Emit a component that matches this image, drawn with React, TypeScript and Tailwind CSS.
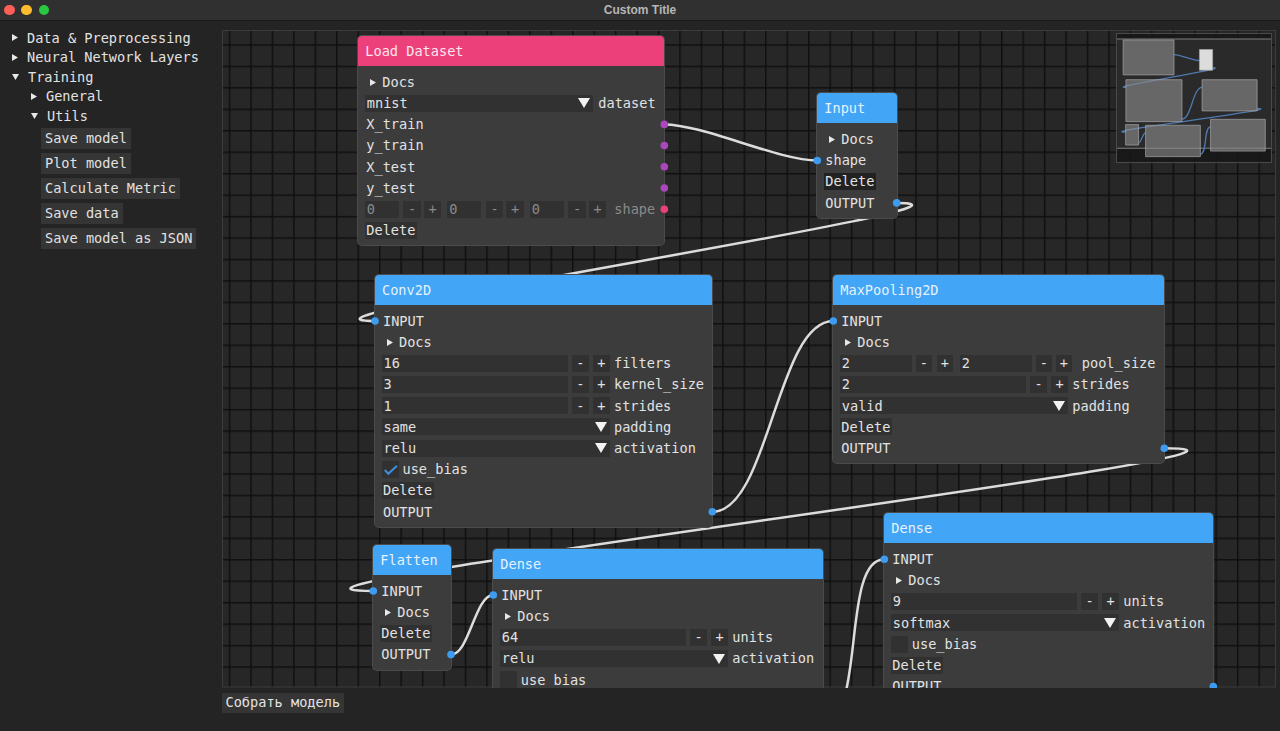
import type { ReactNode } from "react";

const OX = 222;
const OY = 30;
const S = 0.1662;

type Pt = [number, number];

function link(a: Pt, b: Pt) {
  const d = 0.25 * Math.hypot(b[0] - a[0], b[1] - a[1]);
  return `M ${a[0]} ${a[1]} C ${a[0] + d} ${a[1]}, ${b[0] - d} ${b[1]}, ${b[0]} ${b[1]}`;
}

const links: [Pt, Pt][] = [
  [[664.3, 124.4], [817.3, 160.5]],
  [[896.7, 202.9], [375, 321]],
  [[712.3, 511.8], [833.3, 321]],
  [[1164.3, 448.2], [373.3, 591]],
  [[451, 654.6], [493.3, 595]],
  [[822.7, 722.2], [884.3, 559.3]],
];

const pins: { x: number; y: number; c: string }[] = [
  { x: 664.3, y: 124.4, c: "#ab47bc" },
  { x: 664.3, y: 145.6, c: "#ab47bc" },
  { x: 664.3, y: 166.8, c: "#ab47bc" },
  { x: 664.3, y: 188, c: "#ab47bc" },
  { x: 664.3, y: 209.2, c: "#ec407a" },
  { x: 817.3, y: 160.5, c: "#3d9cf0" },
  { x: 896.7, y: 202.9, c: "#3d9cf0" },
  { x: 375, y: 321, c: "#3d9cf0" },
  { x: 712.3, y: 511.8, c: "#3d9cf0" },
  { x: 833.3, y: 321, c: "#3d9cf0" },
  { x: 1164.3, y: 448.2, c: "#3d9cf0" },
  { x: 373.3, y: 591, c: "#3d9cf0" },
  { x: 451, y: 654.6, c: "#3d9cf0" },
  { x: 493.3, y: 595, c: "#3d9cf0" },
  { x: 884.3, y: 559.3, c: "#3d9cf0" },
  { x: 1213.3, y: 686.5, c: "#3d9cf0" },
];

const boxes = [
  { x: 358.3, y: 36, w: 306, h: 210 },
  { x: 817.3, y: 93.3, w: 79.4, h: 124.6, hl: true },
  { x: 375, y: 275, w: 337.3, h: 252.3 },
  { x: 833.3, y: 275, w: 331, h: 187.7 },
  { x: 373.3, y: 545, w: 77.7, h: 123.3 },
  { x: 493.3, y: 549, w: 329.4, h: 189 },
  { x: 884.3, y: 513.3, w: 329, h: 191 },
];

function RightTri() {
  return (
    <svg width="6" height="7" viewBox="0 0 6 7" className="shrink-0">
      <polygon points="0,0 6,3.5 0,7" fill="#e8e8e8" />
    </svg>
  );
}

function DownTri() {
  return (
    <svg width="7" height="6" viewBox="0 0 7 6" className="shrink-0">
      <polygon points="0,0 7,0 3.5,6" fill="#e8e8e8" />
    </svg>
  );
}

function ComboArrow() {
  return (
    <svg width="12" height="10" viewBox="0 0 12 10" className="shrink-0">
      <polygon points="0,0 12,0 6,10" fill="#f2f2f2" />
    </svg>
  );
}

function Row({ children }: { children: ReactNode }) {
  return <div className="h-[17px] flex items-center">{children}</div>;
}

function Text({ children }: { children: ReactNode }) {
  return (
    <Row>
      <span className="pl-[1.5px]">{children}</span>
    </Row>
  );
}

function Docs() {
  return (
    <Row>
      <div className="pl-[5.5px] flex items-center gap-[6px]">
        <RightTri />
        <span>Docs</span>
      </div>
    </Row>
  );
}

function Field({ v, w }: { v: string; w: string }) {
  return <div className={`h-[17px] bg-[#313131] pl-[2px] flex items-center shrink-0 ${w}`}>{v}</div>;
}

function Btn({ v, w = "w-[17.5px]", ml = "ml-[4px]" }: { v: string; w?: string; ml?: string }) {
  return <div className={`h-[17px] bg-[#313131] flex items-center justify-center shrink-0 ${w} ${ml}`}>{v}</div>;
}

function Spin({ v, label }: { v: string; label: string }) {
  return (
    <Row>
      <Field v={v} w="w-[186px]" />
      <Btn v="-" />
      <Btn v="+" ml="ml-[3.5px]" />
      <span className="ml-[4px]">{label}</span>
    </Row>
  );
}

function Combo({ v, label, w = "w-[228.5px]", ml = "ml-[4px]" }: { v: string; label: string; w?: string; ml?: string }) {
  return (
    <Row>
      <div className={`h-[17px] bg-[#313131] pl-[2px] pr-[3px] flex items-center justify-between shrink-0 ${w}`}>
        <span>{v}</span>
        <ComboArrow />
      </div>
      <span className={ml}>{label}</span>
    </Row>
  );
}

function Check({ on }: { on?: boolean }) {
  return (
    <Row>
      <div className="w-[17px] h-[17px] bg-[#313131] shrink-0">
        {on && (
          <svg width="17" height="17" viewBox="0 0 17 17">
            <polyline points="2.8,9 6.3,12.8 15,4.8" fill="none" stroke="#3d8fe0" strokeWidth="2" />
          </svg>
        )}
      </div>
      <span className="ml-[4px]">use_bias</span>
    </Row>
  );
}

function Delete({ dark }: { dark?: boolean }) {
  return (
    <Row>
      <div className={`h-[17px] px-[1.5px] flex items-center ${dark ? "bg-[#222222]" : "bg-[#313131]"}`}>Delete</div>
    </Row>
  );
}

function Node({ x, y, w, title, pink, children }: { x: number; y: number; w: string; title: string; pink?: boolean; children: ReactNode }) {
  return (
    <div
      className={`absolute rounded-[4px] bg-[#3c3c3c] ring-1 ring-[#4b4b4b] ${w}`}
      style={{ left: x - OX, top: y - OY }}
    >
      <div
        className={`h-[30px] rounded-t-[4px] pl-[7px] flex items-center ${
          pink ? "bg-[#ec407a] text-[#fde6ee]" : "bg-[#42a5f5] text-[#e4f2fe]"
        }`}
      >
        {title}
      </div>
      <div className="flex flex-col gap-[4.2px] px-[6.5px] pt-[7.5px] pb-[6.5px]">{children}</div>
    </div>
  );
}

function Tree({ open, label, level }: { open?: boolean; label: string; level: 0 | 1 }) {
  return (
    <div className={`h-[15.5px] flex items-center ${level === 0 ? "pl-[12px] gap-[9px]" : "pl-[31px] gap-[9px]"}`}>
      {open ? <DownTri /> : <RightTri />}
      <span>{label}</span>
    </div>
  );
}

function SideButton({ label }: { label: string }) {
  return <div className="ml-[41px] self-start h-[21px] px-[4px] flex items-center bg-[#353535]">{label}</div>;
}

export default function App() {
  return (
    <div className="w-[1280px] h-[731px] overflow-hidden whitespace-nowrap bg-[#242424] text-[#e2e2e2] text-[13.6px] font-['DejaVu_Sans_Mono',monospace]">
      {/* title bar */}
      <div className="h-[21px] grid grid-cols-[1fr_auto_1fr] items-center bg-[#303030] border-b border-[#1a1a1a]">
        <div className="flex items-center gap-[6.7px] pl-[4px]">
          <span className="w-[10.7px] h-[10.7px] rounded-full bg-[#fe5f57]" />
          <span className="w-[10.7px] h-[10.7px] rounded-full bg-[#febc2e]" />
          <span className="w-[10.7px] h-[10.7px] rounded-full bg-[#28c840]" />
        </div>
        <span className="font-['Liberation_Sans',Arial,sans-serif] font-bold text-[12px] text-[#b6b6b6]">Custom Title</span>
        <div />
      </div>

      <div className="flex pt-[9px]">
        {/* sidebar */}
        <div className="w-[222px] shrink-0 flex flex-col gap-[4px]">
          <Tree label="Data & Preprocessing" level={0} />
          <Tree label="Neural Network Layers" level={0} />
          <Tree label="Training" level={0} open />
          <Tree label="General" level={1} />
          <Tree label="Utils" level={1} open />
          <SideButton label="Save model" />
          <SideButton label="Plot model" />
          <SideButton label="Calculate Metric" />
          <SideButton label="Save data" />
          <SideButton label="Save model as JSON" />
        </div>

        {/* editor */}
        <div className="flex flex-col">
          <div className="relative w-[1054px] h-[657.5px] overflow-hidden bg-[#272727]">
            <svg className="absolute inset-0" width="1054" height="657.5">
              <defs>
                <pattern id="grid" x="6.8" y="14.25" width="21.45" height="21.45" patternUnits="userSpaceOnUse">
                  <rect x="0" y="0" width="1.5" height="21.45" fill="#0f0f0f" />
                  <rect x="0" y="0" width="21.45" height="1.5" fill="#0f0f0f" />
                </pattern>
              </defs>
              <rect x="0" y="0" width="1054" height="657.5" fill="url(#grid)" />
              <rect x="0.5" y="0.5" width="1053" height="656.5" fill="none" stroke="#3c3c3c" />
              <g transform={`translate(${-OX} ${-OY})`}>
                {links.map(([a, b], i) => (
                  <path key={i} d={link(a, b)} fill="none" stroke="#dcdcdc" strokeWidth="2.5" />
                ))}
              </g>
            </svg>

            <Node x={358.3} y={36} w="w-[306px]" title="Load Dataset" pink>
              <Docs />
              <Combo v="mnist" label="dataset" ml="ml-[5px]" />
              <Text>X_train</Text>
              <Text>y_train</Text>
              <Text>X_test</Text>
              <Text>y_test</Text>
              <Row>
                <div className="flex items-center text-[#8a8a8a]">
                  <Field v="0" w="w-[34px]" />
                  <Btn v="-" ml="ml-[4.5px]" />
                  <Btn v="+" ml="ml-[3px]" />
                  <div className="ml-[6px]">
                    <Field v="0" w="w-[34px]" />
                  </div>
                  <Btn v="-" ml="ml-[4.5px]" />
                  <Btn v="+" ml="ml-[3px]" />
                  <div className="ml-[6px]">
                    <Field v="0" w="w-[34px]" />
                  </div>
                  <Btn v="-" ml="ml-[4.5px]" />
                  <Btn v="+" ml="ml-[3px]" />
                  <span className="ml-[8px]">shape</span>
                </div>
              </Row>
              <Delete />
            </Node>

            <Node x={817.3} y={93.3} w="w-[79.4px]" title="Input">
              <Docs />
              <Text>shape</Text>
              <Delete dark />
              <Text>OUTPUT</Text>
            </Node>

            <Node x={375} y={275} w="w-[337.3px]" title="Conv2D">
              <Text>INPUT</Text>
              <Docs />
              <Spin v="16" label="filters" />
              <Spin v="3" label="kernel_size" />
              <Spin v="1" label="strides" />
              <Combo v="same" label="padding" />
              <Combo v="relu" label="activation" />
              <Check on />
              <Delete />
              <Text>OUTPUT</Text>
            </Node>

            <Node x={833.3} y={275} w="w-[331px]" title="MaxPooling2D">
              <Text>INPUT</Text>
              <Docs />
              <Row>
                <Field v="2" w="w-[72px]" />
                <Btn v="-" w="w-[16px]" />
                <Btn v="+" w="w-[16px]" ml="ml-[5px]" />
                <div className="ml-[7px]">
                  <Field v="2" w="w-[72px]" />
                </div>
                <Btn v="-" w="w-[16px]" />
                <Btn v="+" w="w-[16px]" />
                <span className="ml-[10px]">pool_size</span>
              </Row>
              <Spin v="2" label="strides" />
              <Combo v="valid" label="padding" />
              <Delete />
              <Text>OUTPUT</Text>
            </Node>

            <Node x={373.3} y={545} w="w-[77.7px]" title="Flatten">
              <Text>INPUT</Text>
              <Docs />
              <Delete />
              <Text>OUTPUT</Text>
            </Node>

            <Node x={493.3} y={549} w="w-[329.4px]" title="Dense">
              <Text>INPUT</Text>
              <Docs />
              <Spin v="64" label="units" />
              <Combo v="relu" label="activation" />
              <Check />
              <Delete />
              <Text>OUTPUT</Text>
            </Node>

            <Node x={884.3} y={513.3} w="w-[329px]" title="Dense">
              <Text>INPUT</Text>
              <Docs />
              <Spin v="9" label="units" />
              <Combo v="softmax" label="activation" />
              <Check />
              <Delete />
              <Text>OUTPUT</Text>
            </Node>

            {/* pins + minimap */}
            <svg className="absolute inset-0 pointer-events-none" width="1054" height="657.5">
              <g transform={`translate(${-OX} ${-OY})`}>
                {pins.map((p, i) => (
                  <circle key={i} cx={p.x} cy={p.y} r="3.8" fill={p.c} />
                ))}
              </g>
              <defs>
                <clipPath id="mm">
                  <rect x="894" y="3" width="156" height="130" />
                </clipPath>
              </defs>
              <g clipPath="url(#mm)">
                <rect x="894" y="3" width="156" height="130" fill="#181818" fillOpacity="0.85" />
                <rect
                  x={OX * S + 841.6}
                  y={OY * S + 4}
                  width={1054 * S}
                  height={657.5 * S}
                  fill="#303030"
                  fillOpacity="0.75"
                  stroke="#a8a8a8"
                  strokeOpacity="0.7"
                />
                <g transform={`translate(841.6 4) scale(${S})`}>
                  {links.map(([a, b], i) => (
                    <path
                      key={i}
                      d={link(a, b)}
                      fill="none"
                      stroke="#4f7ab0"
                      strokeWidth="1.3"
                      vectorEffect="non-scaling-stroke"
                    />
                  ))}
                  {boxes.map((b, i) => (
                    <rect
                      key={i}
                      x={b.x}
                      y={b.y}
                      width={b.w}
                      height={b.h}
                      fill={b.hl ? "#dcdcdc" : "#8c8c8c"}
                      fillOpacity={b.hl ? 1 : 0.62}
                      stroke="#a5a5a5"
                      strokeOpacity="0.7"
                      strokeWidth="1"
                      vectorEffect="non-scaling-stroke"
                    />
                  ))}
                </g>
              </g>
              <rect x="894.5" y="3.5" width="155" height="129" fill="none" stroke="#4a4a4a" />
            </svg>
          </div>

          <div className="mt-[5px] self-start h-[20px] px-[3.5px] flex items-center bg-[#353535] font-['DejaVu_Sans_Mono','Noto_Sans_CJK_SC',monospace]">
            Собрать модель
          </div>
        </div>
      </div>
    </div>
  );
}
